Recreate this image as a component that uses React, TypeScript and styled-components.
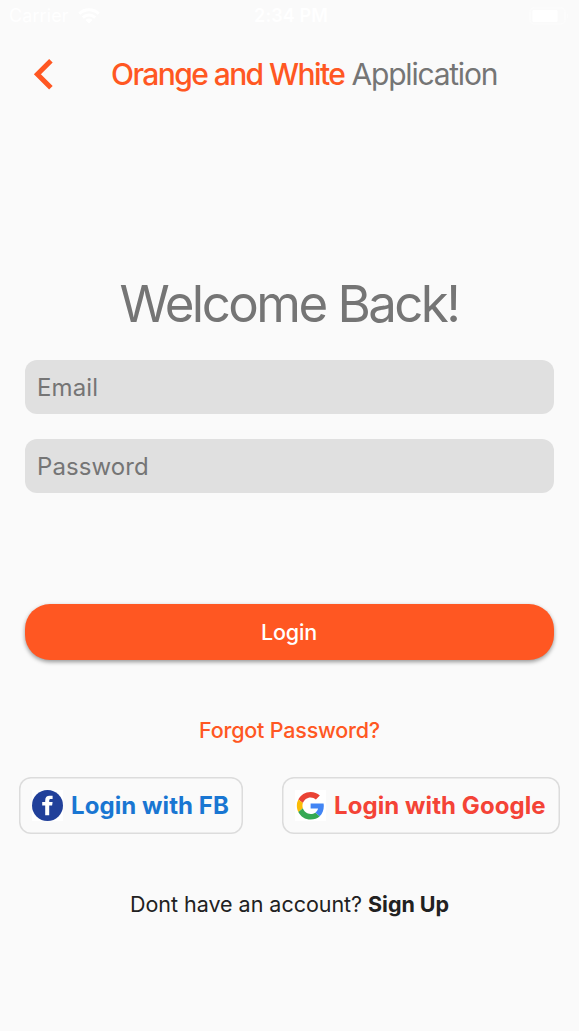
import React from "react";
import styled, { createGlobalStyle } from "styled-components";

const GlobalStyle = createGlobalStyle`
  *, *::before, *::after { box-sizing: border-box; }
  body { margin: 0; background: #fafafa; }
`;

const Screen = styled.main`
  width: 579px;
  height: 1031px;
  overflow: hidden;
  display: flex;
  flex-direction: column;
  background: #fafafa;
  color: #212121;
  font-family: Inter, "Liberation Sans", sans-serif;
  white-space: nowrap;
`;

const StatusBar = styled.div`
  height: 32px;
  flex: none;
  display: grid;
  grid-template-columns: 1fr auto 1fr;
  align-items: center;
  padding: 0 10px 0 9px;
  color: #fff;
  font-size: 18px;
  line-height: 32px;
`;

const Network = styled.div`
  display: flex;
  align-items: center;
  gap: 9px;
  letter-spacing: 0.1px;
`;

const Clock = styled.div`
  padding-left: 4px;
  font-weight: 600;
  letter-spacing: 0.1px;
`;

const BatteryIcon = styled.svg`
  justify-self: end;
`;

const Header = styled.header`
  height: 84px;
  flex: none;
  display: flex;
  align-items: center;
  padding-left: 33px;
`;

const BackButton = styled.button`
  display: flex;
  padding: 0;
  border: 0;
  background: none;
`;

const Title = styled.h1`
  margin: 0 0 0 57px;
  color: #757575;
  font-size: 30px;
  line-height: 36px;
  font-weight: 400;
  letter-spacing: -1.22px;
`;

const Brand = styled.span`
  color: #ff5722;
  font-weight: 500;
  letter-spacing: -1.58px;
`;

const Welcome = styled.h2`
  margin: 157px 0 0;
  padding-right: 1px;
  color: #757575;
  font-size: 51px;
  line-height: 62px;
  font-weight: 400;
  letter-spacing: -2.55px;
  text-align: center;
`;

const Form = styled.form`
  display: flex;
  flex-direction: column;
  padding: 25px 25px 0;
`;

const Field = styled.input`
  height: 54px;
  margin: 0 0 25px;
  padding: 1px 12px 0;
  border: 0;
  border-radius: 12px;
  outline: 0;
  background: #e0e0e0;
  font: 400 24px/53px Inter, "Liberation Sans", sans-serif;
  letter-spacing: 0.1px;
  &::placeholder { color: #757575; opacity: 1; }
`;

const LoginButton = styled.button`
  height: 56px;
  margin-top: 86px;
  padding: 0 1px 1px 0;
  border: 0;
  border-radius: 25px;
  background: #ff5722;
  color: #fff;
  font: 500 21.5px/54px Inter, "Liberation Sans", sans-serif;
  letter-spacing: -0.2px;
  box-shadow: 0 2px 4px rgba(0, 0, 0, 0.4);
`;

const ForgotLink = styled.a`
  margin-top: 56px;
  color: #ff5722;
  font-size: 21.5px;
  line-height: 28px;
  font-weight: 500;
  letter-spacing: -0.2px;
  text-align: center;
`;

const SocialRow = styled.div`
  display: flex;
  justify-content: space-between;
  margin-top: 33px;
  padding: 0 19px;
`;

const SocialButton = styled.button<{ $color: string; $width: number }>`
  display: flex;
  align-items: center;
  gap: 8px;
  width: ${(p) => p.$width}px;
  height: 57px;
  padding: 0 0 0 13px;
  border: 0;
  border-radius: 12px;
  box-shadow: inset 0 0 0 1.5px #dcdcdc;
  background: transparent;
  color: ${(p) => p.$color};
  font: 700 24px/54px Inter, "Liberation Sans", sans-serif;
  letter-spacing: 0.08px;
`;

const Logo = styled.svg`
  flex: none;
  background: #fff;
`;

const SignUpLine = styled.p`
  margin: 55px 0 0;
  font-size: 21.5px;
  line-height: 30px;
  letter-spacing: -0.03px;
  text-align: center;
`;

const SignUpLink = styled.a`
  font-weight: 700;
  letter-spacing: -0.05px;
`;

export default function App() {
  return (
    <Screen>
      <GlobalStyle />
      <StatusBar>
        <Network>
          Carrier
          <svg width="22" height="16" viewBox="0 0 22 16" fill="none" stroke="#fff">
            <path d="M1.2 5.8a14 14 0 0 1 19.6 0" strokeWidth="3" />
            <path d="M4.8 9.6a9 9 0 0 1 12.4 0" strokeWidth="3" />
            <path d="M11 15.6 7.6 12a4.8 4.8 0 0 1 6.8 0z" fill="#fff" stroke="none" />
          </svg>
        </Network>
        <Clock>2:34 PM</Clock>
        <BatteryIcon width="40" height="18" viewBox="0 0 40 18">
          <rect x="1" y="1" width="35" height="16" rx="4" fill="none" stroke="#fcfcfc" strokeWidth="1.4" />
          <rect x="3.5" y="3" width="25" height="12" rx="1" fill="#fff" />
          <path d="M38 6q2 3 0 6z" fill="#fcfcfc" />
        </BatteryIcon>
      </StatusBar>
      <Header>
        <BackButton aria-label="Back">
          <svg width="21" height="32" viewBox="0 0 21 32" fill="none" stroke="#ff5722" strokeWidth="5">
            <path d="M17.9 2.8 4.4 16.3l13.5 13.5" />
          </svg>
        </BackButton>
        <Title>
          <Brand>Orange and White</Brand> Application
        </Title>
      </Header>
      <Welcome>Welcome Back!</Welcome>
      <Form>
        <Field type="email" placeholder="Email" />
        <Field type="password" placeholder="Password" />
        <LoginButton type="button">Login</LoginButton>
      </Form>
      <ForgotLink>Forgot Password?</ForgotLink>
      <SocialRow>
        <SocialButton $color="#1976d2" $width={224}>
          <Logo width="31" height="31" viewBox="0 0 31 31">
            <circle cx="15.5" cy="15.5" r="15.5" fill="#21409a" />
            <path
              d="M13.2 25.2v-9.7h-3v-3.4h3v-1.7c0-3.2 1.7-4.6 4.4-4.6h3v3.3h-1.8c-1.2 0-1.6.5-1.6 1.6v1.4h3.4l-.5 3.4h-2.9v9.7z"
              fill="#fff"
            />
          </Logo>
          Login with FB
        </SocialButton>
        <SocialButton $color="#f44336" $width={278}>
          <Logo width="31" height="31" viewBox="-3.2 -3.4 54 54">
            <path
              fill="#EA4335"
              d="M24 9.5c3.54 0 6.71 1.22 9.21 3.6l6.85-6.85C35.9 2.38 30.47 0 24 0 14.62 0 6.51 5.38 2.56 13.22l7.98 6.19C12.43 13.72 17.74 9.5 24 9.5z"
            />
            <path
              fill="#4285F4"
              d="M46.98 24.55c0-1.57-.15-3.09-.38-4.55H24v9.02h12.94c-.58 2.96-2.26 5.48-4.78 7.18l7.73 6c4.51-4.18 7.09-10.36 7.09-17.65z"
            />
            <path
              fill="#FBBC05"
              d="M10.53 28.59A14.5 14.5 0 0 1 9.77 24c0-1.6.27-3.14.76-4.59l-7.98-6.19A23.9 23.9 0 0 0 0 24c0 3.88.92 7.54 2.56 10.78l7.97-6.19z"
            />
            <path
              fill="#34A853"
              d="M24 48c6.48 0 11.93-2.13 15.89-5.81l-7.73-6c-2.15 1.45-4.92 2.3-8.16 2.3-6.26 0-11.57-4.22-13.47-9.91l-7.98 6.19C6.51 42.62 14.62 48 24 48z"
            />
          </Logo>
          Login with Google
        </SocialButton>
      </SocialRow>
      <SignUpLine>
        Dont have an account? <SignUpLink>Sign Up</SignUpLink>
      </SignUpLine>
    </Screen>
  );
}
